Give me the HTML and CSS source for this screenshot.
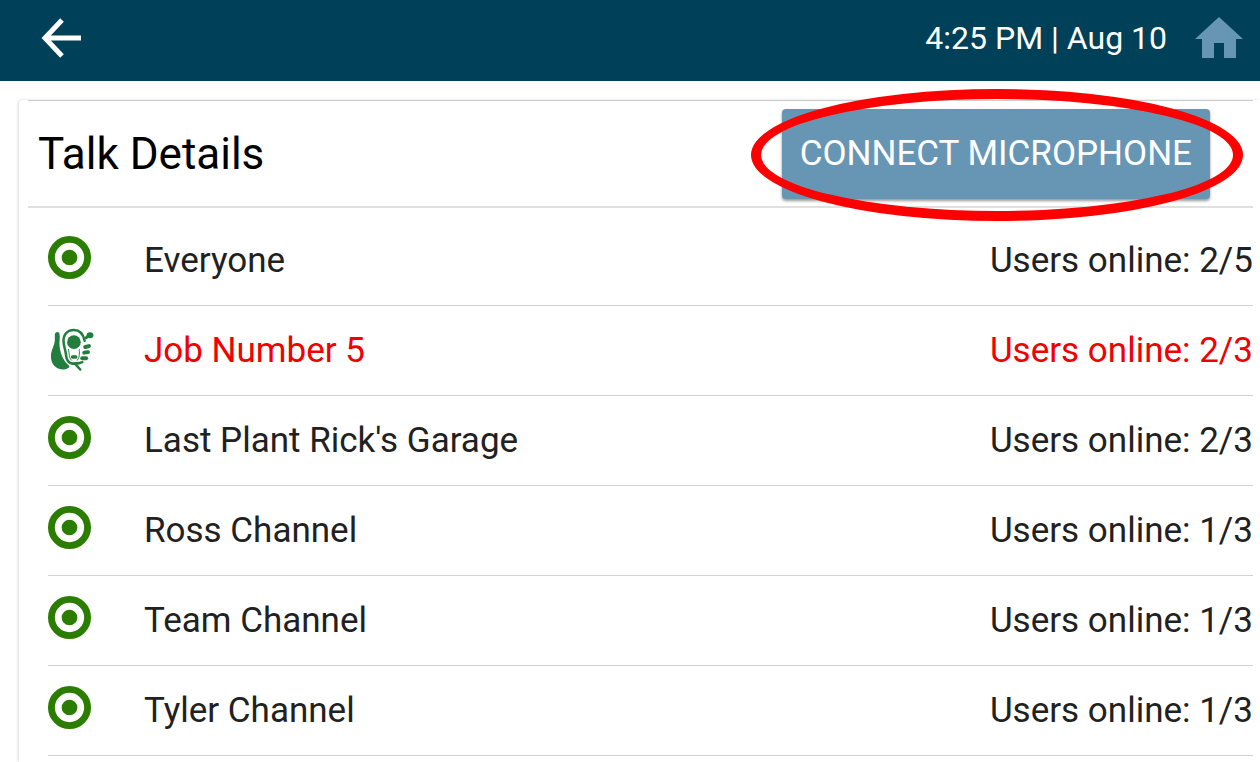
FILE: index.html
```html
<!DOCTYPE html>
<html lang="en">
<head>
  <meta charset="UTF-8">
  <meta name="viewport" content="width=device-width, initial-scale=1.0">
  <title>Talk Details</title>
  <link rel="stylesheet" href="styles.css">
</head>
<body>
  <!-- Shared channel icons -->
  <svg class="sprite" aria-hidden="true">
    <symbol id="icon-channel" viewBox="0 0 44 44">
      <circle cx="22" cy="22" r="18.500" fill="none" stroke="#2b7d00" stroke-width="7"/>
      <circle cx="22" cy="22" r="8" fill="#2b7d00"/>
    </symbol>
    <symbol id="icon-talking" viewBox="0 -2 44 44" overflow="visible">
      <g fill="#237d3e">
        <path d="M7 6Q9 3 11.500 5C13 10 11 15 12 20C13 27 16 34 21 38Q24 41 17 42.500C8 43 3 37 3 29C3 22 7 18 7 12Z"/>
        <circle cx="26.500" cy="14.500" r="7"/>
        <rect x="23.500" y="28" width="6.500" height="3.500" rx="1.500"/>
        <ellipse cx="43" cy="7.500" rx="3.500" ry="3"/>
        <rect x="36" y="17" width="8" height="4" rx="2" transform="rotate(-14 40 19)"/>
        <rect x="35" y="23" width="8" height="4" rx="2" transform="rotate(-8 39 25)"/>
        <rect x="33" y="29" width="8" height="4" rx="2"/>
      </g>
      <g fill="none" stroke="#237d3e" stroke-linecap="round">
        <path d="M37.500 13C36 6 32 2 26.500 2C19 2 15 8 16 15C16.500 20 18 23 18.500 28C19 33 21 36 25 36.500L32 36L35 35M28 37L33 42.500" stroke-width="2.600"/>
        <path d="M39 10L42 8" stroke-width="3"/>
        <path d="M21 22C22 26 21 30 24 33M32 22C32 25 33 29 30 33" stroke-width="1"/>
      </g>
    </symbol>
  </svg>

  <header class="top-bar">
    <button class="icon-button" type="button" aria-label="Back">
      <svg width="40" height="40" viewBox="0 0 40 40">
        <path d="M40 20H5M21 2L4 20L21 38" fill="none" stroke="#fff" stroke-width="5"/>
      </svg>
    </button>
    <span class="clock">4:25 PM | Aug 10</span>
    <a class="home-link" href="#" aria-label="Home">
      <svg width="48" height="42" viewBox="0 0 48 42">
        <path d="M24 0L48 22H41V41H29V26H19V41H7V22H0Z" fill="#6796b5"/>
      </svg>
    </a>
  </header>

  <main class="card">
    <div class="card-header">
      <h1>Talk Details</h1>
      <div class="connect">
        <button class="connect-button" type="button">CONNECT MICROPHONE</button>
        <span class="highlight"></span>
      </div>
    </div>

    <ul class="channels">
      <li>
        <svg class="channel-icon"><use href="#icon-channel"/></svg>
        <span class="name">Everyone</span>
        <span>Users online: 2/5</span>
      </li>
      <li class="active">
        <svg class="channel-icon"><use href="#icon-talking"/></svg>
        <span class="name">Job Number 5</span>
        <span>Users online: 2/3</span>
      </li>
      <li>
        <svg class="channel-icon"><use href="#icon-channel"/></svg>
        <span class="name">Last Plant Rick's Garage</span>
        <span>Users online: 2/3</span>
      </li>
      <li>
        <svg class="channel-icon"><use href="#icon-channel"/></svg>
        <span class="name">Ross Channel</span>
        <span>Users online: 1/3</span>
      </li>
      <li>
        <svg class="channel-icon"><use href="#icon-channel"/></svg>
        <span class="name">Team Channel</span>
        <span>Users online: 1/3</span>
      </li>
      <li>
        <svg class="channel-icon"><use href="#icon-channel"/></svg>
        <span class="name">Tyler Channel</span>
        <span>Users online: 1/3</span>
      </li>
    </ul>
  </main>
</body>
</html>
```
FILE: styles.css
```css
* {
  box-sizing: border-box;
}
body {
  display: flex;
  flex-direction: column;
  min-height: 100vh;
  margin: 0;
  background-color: #fff;
  color: #212121;
  font-family: Roboto, sans-serif;
  font-size: 35px;
}
.sprite {
  position: absolute;
  width: 0;
  height: 0;
}
.top-bar {
  display: flex;
  align-items: center;
  height: 81px;
  padding: 0 17px 5px 41px;
  background-color: #004059;
  color: #fff;
}
.icon-button {
  display: flex;
  padding: 0;
  border: 0;
  background: none;
}
.clock {
  margin-left: auto;
  font-size: 32px;
}
.home-link {
  display: flex;
  margin-left: 28px;
}
.card {
  flex: 1;
  margin: 19px 0 0 19px;
  padding: 0 7px 0 9px;
  border-radius: 4px 0 0 0;
  box-shadow: -1px 0 3px rgba(0, 0, 0, 0.15);
}
.card-header {
  display: flex;
  align-items: center;
  justify-content: space-between;
  height: 108px;
  padding: 0 43px 0 10px;
  border-top: 1px solid #ccc;
  border-bottom: 2px solid #e0e0e0;
}
h1 {
  margin: 0;
  color: #000;
  font-size: 44px;
  font-weight: 400;
}
.connect {
  position: relative;
}
.connect-button {
  display: block;
  height: 90px;
  padding: 0 18px;
  border: 0;
  border-radius: 4px;
  background-color: #6796b5;
  box-shadow: 0 2px 3px rgba(0, 0, 0, 0.4);
  color: #fff;
  font-family: inherit;
  font-size: 35px;
}
.highlight {
  position: absolute;
  inset: -20px -33px -22px -31px;
  border: 10px solid #f00;
  border-radius: 50%;
  pointer-events: none;
}
.channels {
  margin: 0;
  padding: 8px 0 0 20px;
  list-style: none;
}
.channels li {
  display: flex;
  align-items: center;
  height: 90px;
  border-bottom: 1px solid #d2d2d2;
}
.channels .active {
  color: #f20000;
}
.channel-icon {
  width: 43px;
  height: 43px;
  margin: 0 53px 6px 0;
  overflow: visible;
}
.name {
  margin-right: auto;
}
```
